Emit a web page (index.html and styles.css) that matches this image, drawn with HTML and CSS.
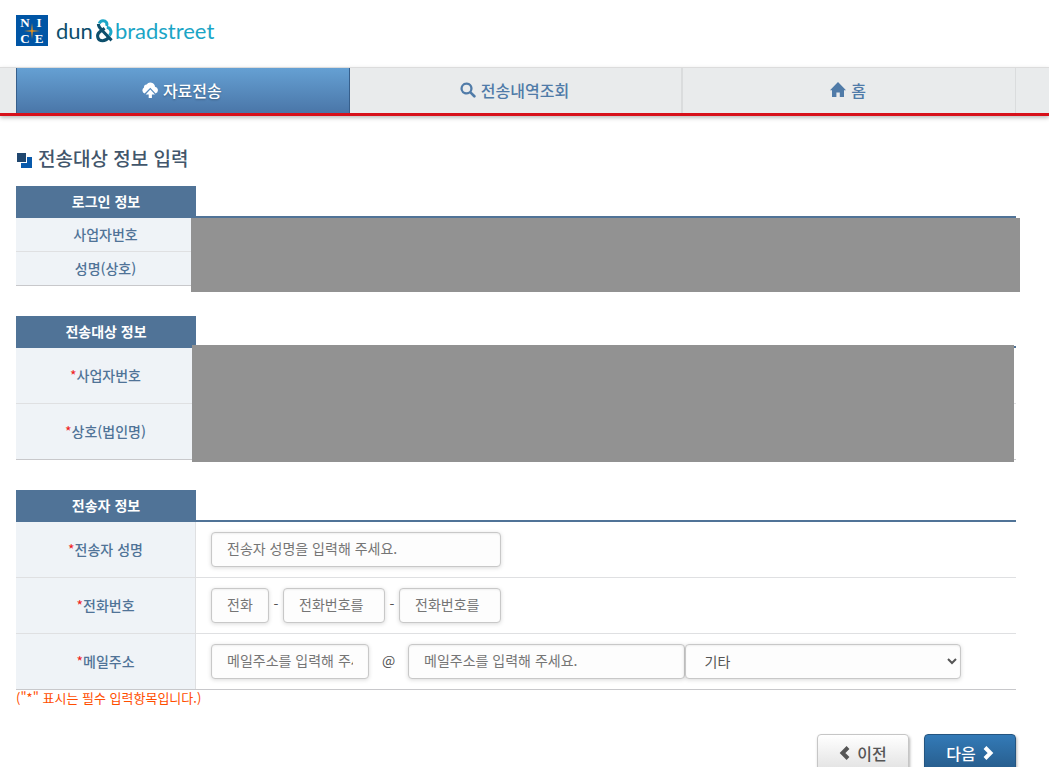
FILE: index.html
```html
<!DOCTYPE html>
<html lang="ko">
<head>
  <meta charset="UTF-8">
  <meta name="viewport" content="width=device-width, initial-scale=1">
  <title>전송대상 정보 입력</title>
  <link rel="stylesheet" href="styles.css">
</head>
<body>

<header class="header">
  <a href="#" class="logo">
    <span class="nice">
      <span>N</span><span>I</span><span>C</span><span>E</span>
      <svg class="nice-star" viewBox="0 0 16 16"><path d="M8 0l.8 7.200L16 8l-7.200.8L8 16l-.8-7.200L0 8l7.200-.8z"/></svg>
    </span>
    <span class="dun">dun</span>
    <svg class="amp" viewBox="0 0 18 24">
      <path class="amp-light" d="M4.200 4.600C5 2.400 6.600 1.800 8 1.800c3 0 4.800 2.600 3.400 5.200M11.800 8.200c4 .6 5.600 5.200 2.600 8.400"/>
      <path class="amp-dark" d="M3.400 5c-.2 2.600 1.400 4 3.600 6.200l9.600 10.200M9.600 9.200l-5 3.800c-3.600 3-2.200 8.800 3 8.800 2.800 0 4.600-1.400 6.400-3.800"/>
    </svg>
    <span class="brad">bradstreet</span>
  </a>
</header>

<nav class="nav">
  <ul>
    <li class="on"><a href="#">
      <svg class="icon" viewBox="0 0 16 16"><path d="M13 4.800A4.600 4.600 0 0 0 4.600 2.600 2.800 2.800 0 0 0 2 5.600 3.200 3.200 0 0 0 2.600 11.400L8.300 5.800l5.300 5.600A3.400 3.400 0 0 0 13 4.800z"/><path d="M8.300 7.400l4.700 5H9.900V16H6.700v-3.600H3.600z"/></svg>
      자료전송</a></li>
    <li><a href="#">
      <svg class="icon" viewBox="0 0 16 16"><path d="M6.500.5a6 6 0 1 0 3.300 11l3.600 3.700a1.300 1.300 0 0 0 1.900-1.900l-3.700-3.600A6 6 0 0 0 6.500.5zm0 2.200a3.800 3.800 0 1 1 0 7.600 3.800 3.800 0 0 1 0-7.600z"/></svg>
      전송내역조회</a></li>
    <li><a href="#">
      <svg class="icon" viewBox="0 0 16 16"><path d="M8 0l8 8.200h-2V15H9.800v-4.500H6.400V15H2V8.200H0z"/></svg>
      홈</a></li>
  </ul>
</nav>

<main class="container">
  <h2><svg class="bullet" viewBox="0 0 16 16"><path class="b2" d="M5 5h11v11H5z"/><path class="b0" d="M0 0h11v11H0z"/><path class="b1" d="M1 1h9v9H1z"/></svg>전송대상 정보 입력</h2>

  <section class="box">
    <div class="box-title"><h3>로그인 정보</h3></div>
    <table class="short">
      <tr><th scope="row">사업자번호</th><td></td></tr>
      <tr><th scope="row">성명(상호)</th><td></td></tr>
    </table>
    <div class="mask mask-login"></div>
  </section>

  <section class="box">
    <div class="box-title"><h3>전송대상 정보</h3></div>
    <table>
      <tr><th scope="row"><em>*</em>사업자번호</th><td></td></tr>
      <tr><th scope="row"><em>*</em>상호(법인명)</th><td></td></tr>
    </table>
    <div class="mask mask-target"></div>
  </section>

  <form>
    <section class="box box-form">
      <div class="box-title"><h3>전송자 정보</h3></div>
      <table>
        <tr>
          <th scope="row"><label for="name"><em>*</em>전송자 성명</label></th>
          <td><div class="fields"><input type="text" id="name" class="name" placeholder="전송자 성명을 입력해 주세요."></div></td>
        </tr>
        <tr>
          <th scope="row"><label for="tel1"><em>*</em>전화번호</label></th>
          <td>
            <div class="fields">
              <input type="text" id="tel1" class="tel-first" placeholder="전화">
              <span class="dash">-</span>
              <input type="text" id="tel2" class="tel" aria-label="전화번호" placeholder="전화번호를">
              <span class="dash">-</span>
              <input type="text" id="tel3" class="tel" aria-label="전화번호" placeholder="전화번호를">
            </div>
          </td>
        </tr>
        <tr>
          <th scope="row"><label for="mail1"><em>*</em>메일주소</label></th>
          <td>
            <div class="fields">
              <input type="text" id="mail1" class="mail-id" placeholder="메일주소를 입력해 주세요.">
              <span class="at">@</span>
              <input type="text" id="mail2" class="mail-host" aria-label="메일주소" placeholder="메일주소를 입력해 주세요.">
              <select id="mail3" class="mail-host" aria-label="메일주소">
                <option>기타</option>
              </select>
            </div>
          </td>
        </tr>
      </table>
    </section>
    <p class="note">("*" 표시는 필수 입력항목입니다.)</p>

    <div class="buttons">
      <button type="button" class="btn">
        <svg class="chevron" viewBox="0 0 11 14"><path d="M9 1.500L3.500 7 9 12.500"/></svg>이전
      </button>
      <button type="button" class="btn btn-next">
        다음<svg class="chevron" viewBox="0 0 11 14"><path d="M2 1.500L7.500 7 2 12.500"/></svg>
      </button>
    </div>
  </form>
</main>

</body>
</html>
```
FILE: styles.css
```css
* { box-sizing: border-box; }

body {
  margin: 0;
  font-family: "Noto Sans CJK KR", sans-serif;
  font-size: 14px;
  line-height: 20px;
  color: #555;
  background: #fff;
}

a { text-decoration: none; }

/* header */
.header {
  display: flex;
  align-items: flex-start;
  height: 67px;
  padding: 15px 16px 0;
}

.logo {
  display: flex;
  align-items: center;
  font-family: Lato, sans-serif;
  font-size: 22px;
  line-height: 31px;
}

.nice {
  position: relative;
  display: grid;
  grid-template-columns: 1fr 1fr;
  width: 32px;
  height: 31px;
  margin-right: 8px;
  padding: 0 2px;
  background: #0055a5;
  color: #fff;
  font-family: "Liberation Serif", serif;
  font-size: 13px;
  font-weight: bold;
  line-height: 15px;
  text-align: center;
}

.nice-star {
  position: absolute;
  top: 8px;
  left: 8px;
  width: 16px;
  height: 16px;
  fill: #e8951c;
}

.dun { color: #0d4f6c; }
.brad { color: #1ba5c6; }

.amp {
  width: 18px;
  height: 24px;
  margin: 0 2px;
  fill: none;
  stroke-width: 3;
}

.amp-light { stroke: #1ba5c6; }
.amp-dark { stroke: #0d4f6c; }

/* navigation */
.nav {
  padding: 0 33px 0 16px;
  background: #e9ebec;
  border-top: 1px solid #dcdcdc;
  border-bottom: 3px solid #d7101a;
  box-shadow: 0 2px 4px rgba(0, 0, 0, 0.25);
}

.nav ul {
  display: flex;
  margin: 0;
  padding: 0;
  list-style: none;
}

.nav li {
  flex: 1;
  border-right: 2px solid #dadcdd;
}

.nav li:last-child { border-right-width: 1px; }

.nav a {
  display: flex;
  align-items: center;
  justify-content: center;
  gap: 5px;
  height: 45px;
  padding: 0 2px 2px 0;
  color: #507ba8;
  font-size: 16px;
  font-weight: 500;
}

.nav .on {
  border: solid #365f8c;
  border-width: 0 1px;
}

.nav .on a {
  background: linear-gradient(#65a0d3, #4a76a8);
  color: #fff;
  text-shadow: 0 1px 2px rgba(0, 0, 0, 0.3);
}

.icon {
  width: 16px;
  height: 16px;
  fill: currentColor;
}

/* content */
.container { padding: 29px 33px 20px 16px; }

h2 {
  display: flex;
  align-items: center;
  gap: 6px;
  margin: 0 0 15px;
  color: #42566b;
  font-size: 19px;
  font-weight: 500;
  line-height: 26px;
}

.bullet {
  width: 16px;
  height: 16px;
  margin-top: 4px;
}

.b0 { fill: #fff; }
.b1 { fill: #20476f; }
.b2 { fill: #0859ab; }

.box {
  position: relative;
  margin-bottom: 30px;
}

.box-form { margin-bottom: 0; }

.box-title { border-bottom: 2px solid #507397; }

h3 {
  width: 180px;
  height: 30px;
  margin: 0;
  background: #507397;
  box-shadow: 0 2px #507397;
  color: #fff;
  font-size: 14px;
  font-weight: 700;
  line-height: 30px;
  text-align: center;
}

table {
  width: 100%;
  table-layout: fixed;
  border-spacing: 0;
  border-bottom: 1px solid #c8c8cb;
}

th, td {
  height: 56px;
  border-bottom: 1px solid #dfe0e2;
}

tr:last-child th,
tr:last-child td {
  height: 55px;
  border-bottom: 0;
}

.short th, .short td { height: 34px; }

.short tr:last-child th,
.short tr:last-child td { height: 33px; }

th {
  width: 180px;
  padding: 0 0 2px;
  border-right: 1px solid #dfe0e2;
  background: #eff3f7;
  color: #507397;
  font-weight: 500;
  text-align: center;
}

td { padding: 0 15px; }

em {
  color: #f02020;
  font-style: normal;
  font-weight: 400;
}

.mask {
  position: absolute;
  background: #929292;
}

.mask-login {
  top: 32px;
  right: -4px;
  bottom: -6px;
  left: 175px;
}

.mask-target {
  top: 29px;
  right: 2px;
  bottom: -2px;
  left: 176px;
}

/* form fields */
.fields {
  display: flex;
  align-items: center;
}

input, select {
  height: 35px;
  padding: 0 15px 4px;
  border: 1px solid #c8c8c8;
  border-radius: 4px;
  background: #fdfdfd;
  box-shadow: 0 1px 4px rgba(0, 0, 0, 0.15), inset 0 1px 2px rgba(0, 0, 0, 0.06);
  color: #555;
  font-family: inherit;
  font-size: 14px;
}

select { padding: 0 0 2px 15px; }

input::placeholder { color: #757575; }

.name { width: 290px; }
.tel-first { width: 58px; }
.tel { width: 102px; }
.mail-id { width: 20%; }
.mail-host { width: 35%; }

.dash,
.at {
  width: 14px;
  padding-bottom: 3px;
  text-align: center;
}

.at { width: 39px; }

.note {
  margin: 0;
  color: #ff4e00;
  font-size: 13px;
  line-height: 16px;
}

.buttons {
  display: flex;
  justify-content: flex-end;
  gap: 15px;
  margin-top: 28px;
}

.btn {
  display: flex;
  align-items: center;
  justify-content: center;
  gap: 7px;
  width: 92px;
  height: 40px;
  padding: 0 0 2px;
  border: 1px solid #c6c6c6;
  border-radius: 4px;
  background: linear-gradient(#fff, #e0e0e0);
  box-shadow: 1px 2px 3px rgba(0, 0, 0, 0.3);
  color: #555;
  font-family: inherit;
  font-size: 16px;
  font-weight: 500;
}

.btn-next {
  border-color: #245580;
  background: linear-gradient(#337ab7, #265a88);
  color: #fff;
}

.chevron {
  width: 11px;
  height: 14px;
  fill: none;
  stroke: currentColor;
  stroke-width: 4;
}
```
